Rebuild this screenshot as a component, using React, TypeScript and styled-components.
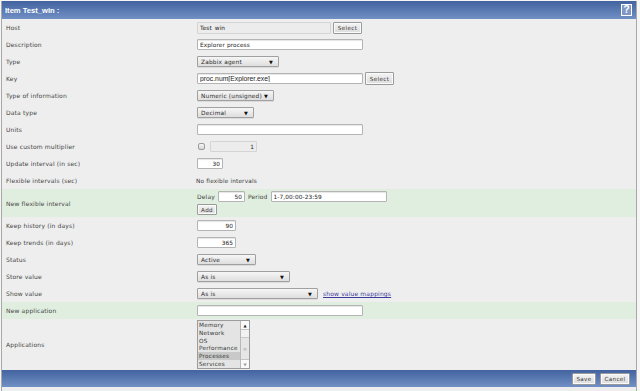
import React from 'react';
import styled, { createGlobalStyle } from 'styled-components';

const Global = createGlobalStyle`
  html, body { margin: 0; padding: 0; background: #f5f5f5; }
  body { font-family: "DejaVu Sans", Verdana, sans-serif; }
  * { box-sizing: border-box; }
`;

const Frame = styled.div`
  width: 636px;
  margin: 1px 0 0 1px;
  border-left: 1px solid #a8a8a8;
  border-right: 1px solid #a8a8a8;
  background: #eeeeee;
  display: flex;
  flex-direction: column;
`;

const Bar = styled.div<{ $end?: boolean }>`
  height: ${p => (p.$end ? 17 : 18)}px;
  display: flex;
  align-items: center;
  justify-content: ${p => (p.$end ? 'flex-end' : 'space-between')};
  gap: 4px;
  padding: 0 ${p => (p.$end ? 6 : 4)}px 0 3px;
  background: linear-gradient(#42639f, #7190c5);
`;

const Title = styled.div`
  font-family: "Liberation Sans", Arial, sans-serif;
  font-weight: bold;
  font-size: 7.6px;
  color: #fff;
`;

const Help = styled.div`
  width: 11px;
  height: 12px;
  border: 1px solid #fff;
  background: #7f97c4;
  color: #fff;
  font-family: "Liberation Sans", Arial, sans-serif;
  font-weight: bold;
  font-size: 10px;
  line-height: 10px;
  text-align: center;
`;

const Row = styled.div<{ $h?: number; $green?: boolean }>`
  display: grid;
  grid-template-columns: 195px 1fr;
  height: ${p => p.$h ?? 17}px;
  align-items: center;
  background: ${p => (p.$green ? '#e0eedf' : 'transparent')};
`;

const Label = styled.div`
  padding-left: 4px;
  font-size: 6px;
  letter-spacing: 0.15px;
  color: #454545;
  white-space: nowrap;
`;

const Value = styled.div<{ $gap?: number }>`
  display: flex;
  align-items: center;
  gap: ${p => p.$gap ?? 2}px;
  font-size: 6px;
  letter-spacing: 0.15px;
  color: #454545;
`;

const Stack = styled.div`
  display: flex;
  flex-direction: column;
  gap: 2px;
  align-items: flex-start;
`;

const Input = styled.input<{ $w: number; $right?: boolean; $mono?: boolean; $gray?: boolean; $h?: number }>`
  width: ${p => p.$w}px;
  height: ${p => p.$h ?? 11}px;
  margin: 0;
  padding: 0 2px;
  line-height: normal;
  border: 1px solid ${p => (p.$gray ? '#d4d4d4' : '#b4b4b4')};
  border-radius: 1px;
  background: ${p => (p.$gray ? '#ececec' : '#ffffff')};
  box-shadow: ${p => (p.$gray ? 'none' : 'inset 0 1px 1px rgba(0,0,0,0.1)')};
  font-family: ${p => (p.$mono ? '"Liberation Sans", Arial, sans-serif' : '"DejaVu Sans", Verdana, sans-serif')};
  font-size: ${p => (p.$mono ? 6.8 : 5.8)}px;
  letter-spacing: ${p => (p.$mono ? 0 : 0.1)}px;
  color: #222;
  text-align: ${p => (p.$right ? 'right' : 'left')};
  outline: none;
`;

const Button = styled.button<{ $w: number; $h?: number }>`
  width: ${p => p.$w}px;
  height: ${p => p.$h ?? 12}px;
  margin: 0;
  padding: 0;
  border: 1px solid #9a9a9a;
  border-radius: 1px;
  background: linear-gradient(#f4f4f4, #dcdcdc);
  box-shadow: inset 0 0 0 1px #fafafa;
  font-family: "DejaVu Sans", Verdana, sans-serif;
  font-size: 5.6px;
  letter-spacing: 0.35px;
  color: #333;
`;

const Select = styled.div<{ $w: number }>`
  width: ${p => p.$w}px;
  height: 11px;
  display: flex;
  align-items: center;
  justify-content: space-between;
  padding: 0 5px 0 3px;
  border: 1px solid #a0a0a0;
  border-radius: 1px;
  background: linear-gradient(#f6f6f6, #dedede);
  box-shadow: 0 1px 0 rgba(0,0,0,0.08);
  font-size: 5.8px;
  letter-spacing: 0.2px;
  color: #2c2c2c;
  white-space: nowrap;
`;

const Arrow = styled.span`
  font-size: 5px;
  color: #111;
`;

const Check = styled.div`
  width: 7px;
  height: 7px;
  margin: 0 5px 0 1px;
  border: 1px solid #9c9c9c;
  border-radius: 2px;
  background: linear-gradient(#f5f5f5, #d6d6d6);
`;

const Link = styled.a`
  margin-left: 3px;
  font-size: 6px;
  color: #3b3b9c;
  text-decoration: underline;
`;

const Plain = styled.span`
  font-size: 5.8px;
  color: #3c3c3c;
  margin-left: -1px;
`;

const ListBox = styled.div`
  width: 53px;
  height: 49px;
  display: flex;
  border: 1px solid #9c9c9c;
  background: #e4e4e4;
`;

const Options = styled.div`
  flex: 1;
  display: flex;
  flex-direction: column;
`;

const Option = styled.div<{ $sel?: boolean }>`
  height: 8px;
  line-height: 8px;
  padding-left: 1px;
  font-size: 5.7px;
  letter-spacing: 0.25px;
  color: #333;
  background: ${p => (p.$sel ? '#c9c9c9' : 'transparent')};
  white-space: nowrap;
  overflow: hidden;
`;

const Scroll = styled.div`
  width: 9px;
  display: flex;
  flex-direction: column;
  border-left: 1px solid #b8b8b8;
  background: #f2f2f2;
`;

const ScrollBtn = styled.div<{ $up?: boolean }>`
  height: 9px;
  display: flex;
  align-items: center;
  justify-content: center;
  background: #fafafa;
  border-bottom: ${p => (p.$up ? '1px solid #c4c4c4' : 'none')};
  border-top: ${p => (p.$up ? 'none' : '1px solid #c4c4c4')};
  font-size: 4px;
  color: ${p => (p.$up ? '#222' : '#999')};
`;

const Thumb = styled.div`
  flex: 1;
  display: flex;
  flex-direction: column;
  justify-content: flex-end;
`;

const ThumbBody = styled.div`
  height: 22px;
  background: #e6e6e6;
  border-top: 1px solid #c8c8c8;
  display: flex;
  align-items: center;
  justify-content: center;
  font-size: 5px;
  color: #aaa;
`;

const Bottom = styled.div`
  height: 4px;
  background: #eeeeee;
`;

export default function App() {
  return (
    <>
      <Global />
      <Frame>
        <Bar>
          <Title>Item Test_win :</Title>
          <Help>?</Help>
        </Bar>

        <Row>
          <Label>Host</Label>
          <Value>
            <Input $w={134} $h={12} $gray readOnly defaultValue="Test_win" />
            <Button $w={29} $h={12}>Select</Button>
          </Value>
        </Row>
        <Row>
          <Label>Description</Label>
          <Value><Input $w={166} readOnly defaultValue="Explorer process" /></Value>
        </Row>
        <Row>
          <Label>Type</Label>
          <Value><Select $w={82}>Zabbix agent<Arrow>▼</Arrow></Select></Value>
        </Row>
        <Row>
          <Label>Key</Label>
          <Value>
            <Input $w={166} $mono readOnly defaultValue="proc.num[Explorer.exe]" />
            <Button $w={29} $h={13}>Select</Button>
          </Value>
        </Row>
        <Row>
          <Label>Type of information</Label>
          <Value><Select $w={77}>Numeric (unsigned)<Arrow>▼</Arrow></Select></Value>
        </Row>
        <Row>
          <Label>Data type</Label>
          <Value><Select $w={57}>Decimal<Arrow>▼</Arrow></Select></Value>
        </Row>
        <Row>
          <Label>Units</Label>
          <Value><Input $w={166} readOnly defaultValue="" /></Value>
        </Row>
        <Row>
          <Label>Use custom multiplier</Label>
          <Value $gap={0}>
            <Check />
            <Input $w={47} $gray $right readOnly defaultValue="1" />
          </Value>
        </Row>
        <Row>
          <Label>Update interval (in sec)</Label>
          <Value><Input $w={26} $right readOnly defaultValue="30" /></Value>
        </Row>
        <Row>
          <Label>Flexible intervals (sec)</Label>
          <Value><Plain>No flexible intervals</Plain></Value>
        </Row>
        <Row $h={28} $green>
          <Label>New flexible interval</Label>
          <Stack>
            <Value $gap={3}>
              <span>Delay</span>
              <Input $w={27} $right readOnly defaultValue="50" />
              <span>Period</span>
              <Input $w={116} readOnly defaultValue="1-7,00:00-23:59" />
            </Value>
            <Button $w={20} $h={11}>Add</Button>
          </Stack>
        </Row>
        <Row>
          <Label>Keep history (in days)</Label>
          <Value><Input $w={39} $right readOnly defaultValue="90" /></Value>
        </Row>
        <Row>
          <Label>Keep trends (in days)</Label>
          <Value><Input $w={39} $right readOnly defaultValue="365" /></Value>
        </Row>
        <Row>
          <Label>Status</Label>
          <Value><Select $w={59}>Active<Arrow>▼</Arrow></Select></Value>
        </Row>
        <Row>
          <Label>Store value</Label>
          <Value><Select $w={93}>As is<Arrow>▼</Arrow></Select></Value>
        </Row>
        <Row>
          <Label>Show value</Label>
          <Value>
            <Select $w={121}>As is<Arrow>▼</Arrow></Select>
            <Link>show value mappings</Link>
          </Value>
        </Row>
        <Row $green>
          <Label>New application</Label>
          <Value><Input $w={166} readOnly defaultValue="" /></Value>
        </Row>
        <Row $h={51}>
          <Label>Applications</Label>
          <Value>
            <ListBox>
              <Options>
                <Option>Memory</Option>
                <Option>Network</Option>
                <Option>OS</Option>
                <Option>Performance</Option>
                <Option $sel>Processes</Option>
                <Option>Services</Option>
              </Options>
              <Scroll>
                <ScrollBtn $up>▲</ScrollBtn>
                <Thumb><ThumbBody>≡</ThumbBody></Thumb>
                <ScrollBtn>▼</ScrollBtn>
              </Scroll>
            </ListBox>
          </Value>
        </Row>

        <Bar $end>
          <Button $w={24} $h={12}>Save</Button>
          <Button $w={30} $h={12}>Cancel</Button>
        </Bar>
        <Bottom />
      </Frame>
    </>
  );
}
